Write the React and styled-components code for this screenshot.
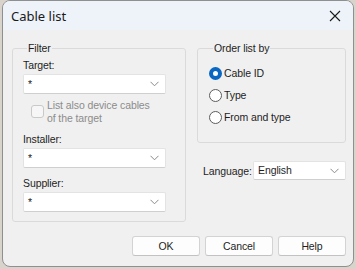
import React from "react";
import styled, { createGlobalStyle } from "styled-components";

const Global = createGlobalStyle`
  html, body { margin: 0; padding: 0; }
  body {
    width: 356px; height: 269px; overflow: hidden;
    background: #d9d4cb;
    font-family: "Liberation Sans", Arial, sans-serif;
  }
`;

const Window = styled.div`
  box-sizing: border-box;
  margin-left: 2px;
  width: 352px;
  height: 267px;
  border: 1px solid #8f8f8f;
  border-radius: 8px;
  overflow: hidden;
  background: #f0f0f0;
  display: flex;
  flex-direction: column;
`;

const TitleBar = styled.div`
  height: 29px;
  flex: none;
  background: #eef3f9;
  display: flex;
  align-items: center;
  justify-content: space-between;
  padding: 0 6px 0 8px;
`;

const Title = styled.span`
  font-family: "Noto Sans", "Open Sans", sans-serif;
  font-size: 13px;
  color: #1a1a1a;
`;

const Close = styled.span`
  width: 24px; height: 24px;
  display: flex; align-items: center; justify-content: center;
`;

const Body = styled.div`
  flex: 1;
  display: flex;
  flex-direction: column;
  padding: 12px 7px 10px 9px;
  font-size: 10.5px;
  letter-spacing: -0.1px;
  color: #1e1e1e;
`;

const Columns = styled.div`
  display: flex;
  gap: 11px;
  align-items: flex-start;
`;

const Group = styled.fieldset`
  box-sizing: border-box;
  margin: 0;
  width: ${p => p.$w}px;
  height: ${p => p.$h}px;
  border: 1px solid #dadada;
  border-radius: 3px;
  padding: ${p => p.$pad};
  display: flex;
  flex-direction: column;
`;

const Legend = styled.legend`
  padding: 0 1px;
  margin-left: 4px;
  line-height: 13px;
  color: #1e1e1e;
`;

const Label = styled.div`
  line-height: 13px;
  margin-top: ${p => p.$mt || 0}px;
  margin-bottom: 2px;
`;

const Select = styled.div`
  box-sizing: border-box;
  flex: none;
  width: ${p => p.$w}px;
  height: ${p => p.$h || 20}px;
  background: #fff;
  border: 1px solid #e3e3e3;
  border-bottom-color: #cfcfcf;
  border-radius: 2px;
  display: flex;
  align-items: center;
  justify-content: space-between;
  padding: 0 6px 0 4px;
  line-height: 13px;
`;

const Chevron = () => (
  <svg width="9" height="6" viewBox="0 0 9 6">
    <path d="M0.5 0.8 L4.5 4.8 L8.5 0.8" fill="none" stroke="#8a8a8a" strokeWidth="1" />
  </svg>
);

const CheckRow = styled.div`
  display: flex;
  align-items: flex-start;
  gap: 3px;
  margin: 5px 0 0 8px;
  color: #8c8c8c;
  line-height: 13px;
`;

const CheckBox = styled.span`
  box-sizing: border-box;
  flex: none;
  width: 13px; height: 13px;
  margin-top: 6px;
  border: 1px solid #c9c9c9;
  border-radius: 3px;
  background: #f6f6f6;
`;

const RadioRow = styled.div`
  display: flex;
  align-items: center;
  gap: 2px;
  height: 22px;
  line-height: 13px;
`;

const RadioDot = styled.span`
  box-sizing: border-box;
  flex: none;
  width: 13px; height: 13px;
  border-radius: 50%;
  background: #fff;
  border: ${p => (p.$on ? "4px solid #0a67c2" : "1px solid #5c5c5c")};
`;

const Right = styled.div`
  display: flex;
  flex-direction: column;
`;

const LangRow = styled.div`
  display: flex;
  align-items: center;
  margin: 18px 0 0 6px;
`;

const LangLabel = styled.span`
  flex: 1;
`;

const Buttons = styled.div`
  margin-top: auto;
  display: flex;
  justify-content: flex-end;
  gap: 5px;
`;

const Button = styled.button`
  box-sizing: border-box;
  width: 68px;
  height: 20px;
  background: #fdfdfd;
  border: 1px solid #d3d3d3;
  border-bottom-color: #c2c2c2;
  border-radius: 3px;
  font-family: inherit;
  font-size: inherit;
  letter-spacing: inherit;
  color: #1e1e1e;
  padding: 0;
`;

export default function App() {
  return (
    <>
      <Global />
      <Window>
        <TitleBar>
          <Title>Cable list</Title>
          <Close>
            <svg width="12" height="12" viewBox="0 0 12 12">
              <path d="M1 1 L11 11 M11 1 L1 11" stroke="#1a1a1a" strokeWidth="1.1" />
            </svg>
          </Close>
        </TitleBar>
        <Body>
          <Columns>
            <Group $w={174} $h={180} $pad="4px 18px 0 10px">
              <Legend>Filter</Legend>
              <Label>Target:</Label>
              <Select $w={143}>*<Chevron /></Select>
              <CheckRow>
                <CheckBox />
                <span>List also device cables<br />of the target</span>
              </CheckRow>
              <Label $mt={8}>Installer:</Label>
              <Select $w={143}>*<Chevron /></Select>
              <Label $mt={9}>Supplier:</Label>
              <Select $w={143}>*<Chevron /></Select>
            </Group>
            <Right>
              <Group $w={149} $h={101} $pad="7px 4px 0 11px">
                <Legend>Order list by</Legend>
                <RadioRow><RadioDot $on />Cable ID</RadioRow>
                <RadioRow><RadioDot />Type</RadioRow>
                <RadioRow><RadioDot />From and type</RadioRow>
              </Group>
              <LangRow>
                <LangLabel>Language:</LangLabel>
                <Select $w={93} $h={19}>English<Chevron /></Select>
              </LangRow>
            </Right>
          </Columns>
          <Buttons>
            <Button>OK</Button>
            <Button>Cancel</Button>
            <Button>Help</Button>
          </Buttons>
        </Body>
      </Window>
    </>
  );
}
